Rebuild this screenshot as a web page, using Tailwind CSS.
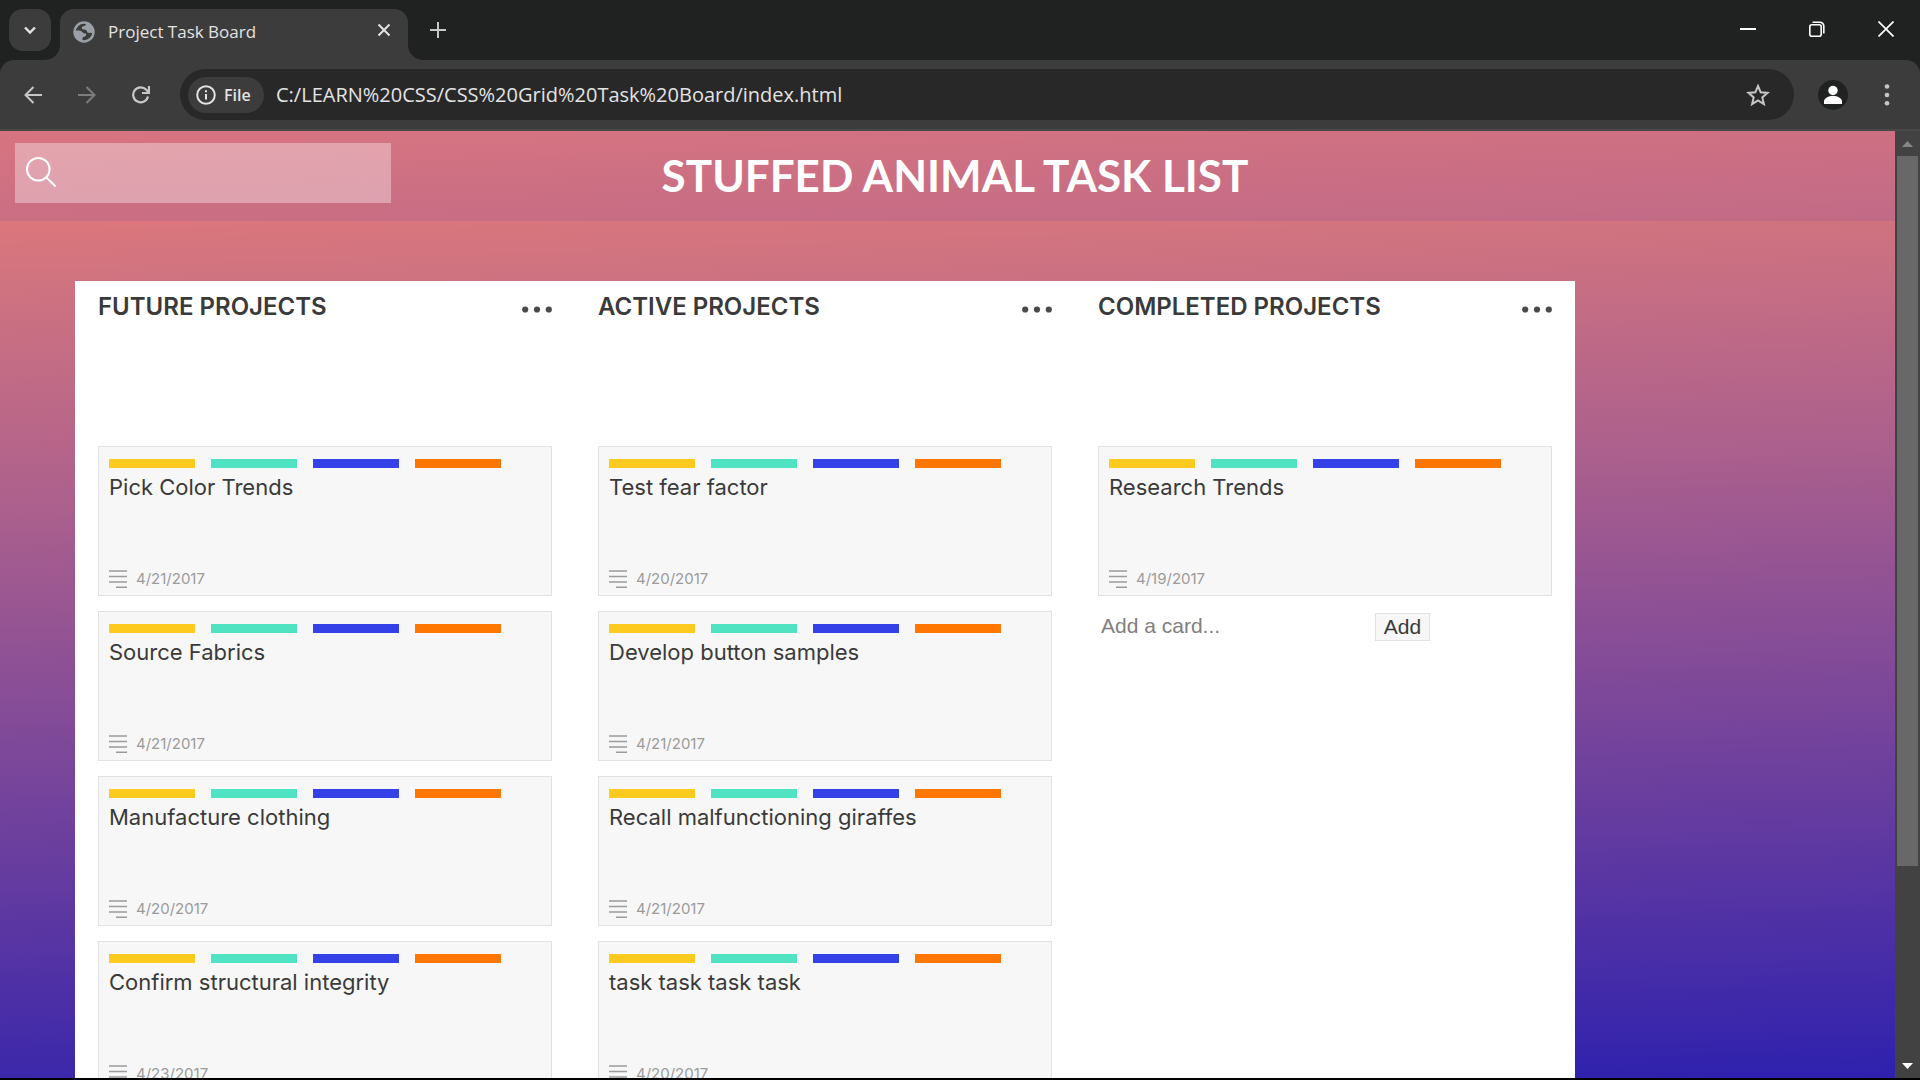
<!DOCTYPE html>
<html lang="en">
<head>
<meta charset="utf-8">
<title>Project Task Board</title>
<script src="https://cdn.jsdelivr.net/npm/@tailwindcss/browser@4"></script>
</head>
<body class="flex h-screen flex-col overflow-hidden border-b-2 border-black bg-[#3c3c3c] font-['Open_Sans',sans-serif]">

<!-- Tab strip -->
<div class="flex h-[60px] shrink-0 items-end bg-[#202221]">
  <button aria-label="Search tabs" class="mb-[9px] ml-[9px] flex size-[42px] items-center justify-center rounded-[14px] bg-[#3c3c3c]">
    <svg class="size-[18px]" viewBox="0 0 18 18" fill="none" stroke="#e3e3e3" stroke-width="2.4"><path d="M4 6.5l5 5 5-5"/></svg>
  </button>
  <svg class="ml-[-6px] size-[15px]" viewBox="0 0 15 15" fill="#3c3c3c"><path d="M15 0v15H0A15 15 0 0 0 15 0z"/></svg>
  <div class="flex h-[51px] w-[348px] items-center rounded-t-[14px] bg-[#3c3c3c] pr-4 pb-[10px] pl-[13px]">
    <svg class="mt-1 size-[22px]" viewBox="0 0 22 22"><circle cx="11" cy="11" r="9.5" fill="#3c3c3c" stroke="#9aa0a6" stroke-width="2.4"/><path fill="#9aa0a6" d="M12.500 2C17 2.300 20.500 6.500 20.200 11.500c-.8.6-1.900.7-2.800-.1-.8.700-2.300.700-3.200-.2-.1-1.700-1.300-2.600-3-2.700-1.300-.1-2.200-.3-2.400-1.200-.2-1.200.4-2 1.600-2.100 1.300-.1 2.200-.6 2.500-1.400zM1.800 9.500h4.400c1.500 0 2.400.8 3.500 1.900 1 1 2.300 1 3.300 1.200.6 1.700-.1 2.900-1.700 3.100-1.300.2-1.900.9-1.900 2.200v2C4.500 19.200 1.200 14.500 1.800 9.500z"/></svg>
    <span class="mt-1 ml-[13px] grow text-[17px] leading-6 text-[#e3e3e3]">Project Task Board</span>
    <button aria-label="Close tab" class="flex size-4 items-center justify-center">
      <svg class="size-4" viewBox="0 0 16 16" fill="none" stroke="#e3e3e3" stroke-width="2"><path d="M2.500 2.500l11 11M13.500 2.500l-11 11"/></svg>
    </button>
  </div>
  <svg class="size-[15px]" viewBox="0 0 15 15" fill="#3c3c3c"><path d="M0 0v15h15A15 15 0 0 1 0 0z"/></svg>
  <button aria-label="New tab" class="mb-[22px] ml-[7px] size-4">
    <svg class="size-4" viewBox="0 0 16 16" fill="none" stroke="#c7c7c7" stroke-width="2"><path d="M8 0v16M0 8h16"/></svg>
  </button>
  <div class="mb-[23px] ml-auto flex items-center gap-[53px] pr-[26px]">
    <button aria-label="Minimize"><svg class="size-4" viewBox="0 0 16 16" fill="#fff"><path d="M0 7h16v2H0z"/></svg></button>
    <button aria-label="Restore"><svg class="size-4" viewBox="0 0 16 16" fill="none" stroke="#fff" stroke-width="1.600"><rect x=".8" y="3.800" width="11.400" height="11.400" rx="2"/><path d="M3.500 1.200h7.500a3.800 3.800 0 0 1 3.800 3.800v7.500"/></svg></button>
    <button aria-label="Close"><svg class="size-4" viewBox="0 0 16 16" fill="none" stroke="#fff" stroke-width="1.700"><path d="M.5.5l15 15M15.500.5l-15 15"/></svg></button>
  </div>
</div>

<!-- Toolbar -->
<div class="shrink-0 bg-[#202221]">
  <div class="flex h-[71px] items-center rounded-t-[14px] border-b-2 border-[#484848] bg-[#3c3c3c]">
    <div class="flex w-[180px] shrink-0 items-center gap-[36px] pl-6">
      <button aria-label="Back"><svg class="size-[18px]" viewBox="0 0 18 18" fill="none" stroke="#c7c7c7" stroke-width="2"><path d="M18 9H2M9.500 1L1.500 9l8 8"/></svg></button>
      <button aria-label="Forward"><svg class="size-[18px]" viewBox="0 0 18 18" fill="none" stroke="#7d7d7d" stroke-width="2"><path d="M0 9h16M8.500 1l8 8-8 8"/></svg></button>
      <button aria-label="Reload"><svg class="size-[18px]" viewBox="0 0 18 18" fill="none" stroke="#c7c7c7" stroke-width="2.200"><path d="M16 10.500A7.500 7.500 0 1 1 14.300 3.800L17 6.500"/><path d="M17 0v7h-7"/></svg></button>
    </div>
    <div class="flex h-[51px] grow items-center rounded-full bg-[#282828] pr-6 pl-2">
      <button class="flex h-9 w-[76px] shrink-0 items-center gap-2 rounded-full bg-[#3c3c3c] pl-2 text-[16px] font-semibold text-[#e3e3e3]">
        <svg class="size-5" viewBox="0 0 20 20" fill="none" stroke="#e3e3e3" stroke-width="2"><circle cx="10" cy="10" r="8.800"/><path d="M10 9v5.500M10 5.200v2"/></svg>File
      </button>
      <input aria-label="Address" value="C:/LEARN%20CSS/CSS%20Grid%20Task%20Board/index.html" class="ml-3 min-w-0 grow bg-transparent text-[20px] leading-7 text-[#e3e3e3] outline-none">
      <button aria-label="Bookmark"><svg class="size-6" viewBox="0 0 24 24" fill="none" stroke="#c7c7c7" stroke-width="2"><path d="M12 3l2.700 6.300 6.800.6-5.200 4.500 1.600 6.700L12 17.500l-5.900 3.600 1.600-6.700-5.200-4.500 6.800-.6z"/></svg></button>
    </div>
    <button aria-label="Profile" class="ml-6"><svg class="size-[30px]" viewBox="0 0 30 30"><circle cx="15" cy="15" r="15" fill="#202221"/><circle cx="15" cy="10.500" r="4.700" fill="#fff"/><path fill="#fff" d="M6 24v-2.500c0-3.500 4.500-5.500 9-5.500s9 2 9 5.500V24z"/></svg></button>
    <button aria-label="Menu" class="mr-[22px] ml-[28px]"><svg class="h-[22px] w-[22px]" viewBox="0 0 22 22" fill="#c7c7c7"><circle cx="11" cy="2.500" r="2.300"/><circle cx="11" cy="11" r="2.300"/><circle cx="11" cy="19.300" r="2.300"/></svg></button>
  </div>
</div>

<!-- Page viewport -->
<div class="flex min-h-0 grow">
  <div class="flex min-w-0 grow flex-col overflow-hidden bg-[linear-gradient(178deg,#e27a7a_0%,#dc777c_9%,#d07380_15%,#ae618c_36%,#643ba0_74%,#2e21ae_100%)]">
    <header class="grid h-[90px] shrink-0 grid-cols-[1fr_auto_1fr] items-start bg-[linear-gradient(178deg,#d77480,#c16a87)] px-[15px] pt-3">
      <label class="flex h-[60px] w-[376px] items-start bg-white/35 pt-[14px] pl-[11px]">
        <svg class="size-[30px] shrink-0" viewBox="0 0 30 30" fill="none" stroke="#fff" stroke-width="2"><circle cx="12.300" cy="12.300" r="11.300"/><path d="M20.500 20.500l9 9"/></svg>
        <input type="text" aria-label="Search" class="h-8 min-w-0 grow bg-transparent px-3 text-[20px] text-white outline-none">
      </label>
      <h1 class="pt-1 pl-[15px] font-['Lato',sans-serif] text-[44px] leading-[56px] font-bold text-white">STUFFED ANIMAL TASK LIST</h1>
    </header>
    <main id="board" class="mx-[75px] mt-[60px] grid w-4/5 max-w-[1500px] grow grid-cols-3 overflow-hidden bg-white font-['Inter',sans-serif] text-[#3a3a3a]"></main>
  </div>
  <div class="flex w-[25px] shrink-0 flex-col items-center bg-[#424242]">
    <svg class="h-[25px] w-[11px] shrink-0" viewBox="0 0 11 25" fill="#868686"><path d="M0 16l5.500-6 5.500 6z"/></svg>
    <div class="h-3/4 w-[21px] bg-[#686868]"></div>
    <svg class="mt-auto h-[25px] w-[11px] shrink-0" viewBox="0 0 11 25" fill="#fff"><path d="M0 10l5.500 6 5.500-6z"/></svg>
  </div>
</div>

<script>
const columns = [
  ['FUTURE PROJECTS', [['Pick Color Trends','4/21/2017'],['Source Fabrics','4/21/2017'],['Manufacture clothing','4/20/2017'],['Confirm structural integrity','4/23/2017']]],
  ['ACTIVE PROJECTS', [['Test fear factor','4/20/2017'],['Develop button samples','4/21/2017'],['Recall malfunctioning giraffes','4/21/2017'],['task task task task','4/20/2017']]],
  ['COMPLETED PROJECTS', [['Research Trends','4/19/2017']]]
];
const card = ([title, date]) => `
  <article class="flex h-[150px] shrink-0 flex-col border border-[#e2e2e2] bg-[#f7f7f7] px-[10px] pt-3">
    <div class="flex gap-4">
      <span class="h-[9px] w-[86px] bg-[#fdca20]"></span><span class="h-[9px] w-[86px] bg-[#50e3c2]"></span><span class="h-[9px] w-[86px] bg-[#3341e6]"></span><span class="h-[9px] w-[86px] bg-[#ff7700]"></span>
    </div>
    <h3 class="mt-1 text-[22px] leading-[30px]">${title}</h3>
    <div class="mt-auto flex items-center pb-[6px] text-[15px] leading-5 text-[#9b9b9b]">
      <svg class="mr-[9px] size-[18px]" viewBox="0 0 18 18" stroke="#9b9b9b" stroke-width="1.600"><path d="M0 1h18M0 6.500h18M0 12h18M7 17.200h11"/></svg>${date}
    </div>
  </article>`;
document.getElementById('board').innerHTML = columns.map(([name, cards], i) => `
  <section class="flex flex-col gap-[15px] px-[23px] pt-[10px]">
    <div class="flex h-[140px] shrink-0 items-start justify-between">
      <h2 class="text-[24px] leading-8 font-semibold">${name}</h2>
      <button aria-label="Column menu" class="mt-[15px]"><svg class="h-[7px] w-[30px]" viewBox="0 0 30 7" fill="#4a4a4a"><circle cx="3.200" cy="3.500" r="3.100"/><circle cx="15" cy="3.500" r="3.100"/><circle cx="26.800" cy="3.500" r="3.100"/></svg></button>
    </div>
    ${cards.map(card).join('')}
    ${i === 2 ? `<form class="flex items-center pt-[2px] pl-[3px] font-['Liberation_Sans',sans-serif] text-[21px]">
      <input type="text" aria-label="Add a card" placeholder="Add a card..." class="h-7 w-[274px] bg-transparent pb-[2px] outline-none placeholder:text-[#808080]">
      <button type="button" class="h-7 w-[55px] border border-[#e2e2e2] bg-[#f7f7f7] leading-6">Add</button>
    </form>` : ''}
  </section>`).join('');
</script>
</body>
</html>
